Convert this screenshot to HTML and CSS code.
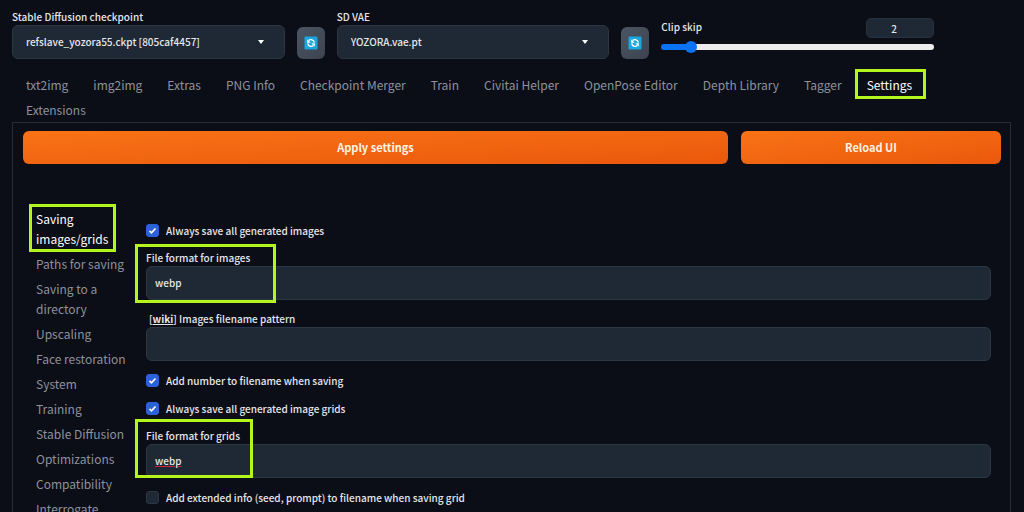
FILE: index.html
```html
<!DOCTYPE html>
<html lang="en">
<head>
<meta charset="utf-8">
<meta name="viewport" content="width=device-width, initial-scale=1">
<title>Stable Diffusion</title>
<link rel="stylesheet" href="styles.css">
</head>
<body>
<header class="quick">
  <div class="field">
    <label for="ckpt">Stable Diffusion checkpoint</label>
    <select id="ckpt" class="control select"><option>refslave_yozora55.ckpt [805caf4457]</option></select>
  </div>
  <button class="refresh" type="button" aria-label="Refresh checkpoints">
    <svg viewBox="0 0 14 14" width="14" height="14"><rect x="0.5" y="0.5" width="13" height="13" rx="1" fill="#1ba6dd"/><g fill="none" stroke="#fff" stroke-width="1.4"><path d="M4.6 4.6A3.4 3.4 0 0 1 10.3 6.6"/><path d="M9.4 9.4A3.4 3.4 0 0 1 3.7 7.4"/></g><path d="M3.2 3.2v3.5h3.5zM10.8 10.8V7.3H7.3z" fill="#fff"/></svg>
  </button>
  <div class="field">
    <label for="vae">SD VAE</label>
    <select id="vae" class="control select"><option>YOZORA.vae.pt</option></select>
  </div>
  <button class="refresh" type="button" aria-label="Refresh VAE list">
    <svg viewBox="0 0 14 14" width="14" height="14"><rect x="0.5" y="0.5" width="13" height="13" rx="1" fill="#1ba6dd"/><g fill="none" stroke="#fff" stroke-width="1.4"><path d="M4.6 4.6A3.4 3.4 0 0 1 10.3 6.6"/><path d="M9.4 9.4A3.4 3.4 0 0 1 3.7 7.4"/></g><path d="M3.2 3.2v3.5h3.5zM10.8 10.8V7.3H7.3z" fill="#fff"/></svg>
  </button>
  <div class="slider">
    <div class="slider-head">
      <label for="clip">Clip skip</label>
      <input class="number" type="number" value="2" min="1" max="12" aria-label="Clip skip value">
    </div>
    <input id="clip" class="range" type="range" min="1" max="12" value="2">
  </div>
</header>

<nav class="tabs">
  <button type="button">txt2img</button>
  <button type="button">img2img</button>
  <button type="button">Extras</button>
  <button type="button">PNG Info</button>
  <button type="button">Checkpoint Merger</button>
  <button type="button">Train</button>
  <button type="button">Civitai Helper</button>
  <button type="button">OpenPose Editor</button>
  <button type="button">Depth Library</button>
  <button type="button">Tagger</button>
  <button type="button" class="active">Settings<span class="mark mark-tab"></span></button>
  <button type="button">Extensions</button>
</nav>

<main class="panel">
  <div class="actions">
    <button class="primary wide" type="button">Apply settings</button>
    <button class="primary" type="button">Reload UI</button>
  </div>
  <div class="settings">
    <nav class="sections">
      <button type="button" class="active">Saving images/grids<span class="mark mark-section"></span></button>
      <button type="button">Paths for saving</button>
      <button type="button">Saving to a directory</button>
      <button type="button">Upscaling</button>
      <button type="button">Face restoration</button>
      <button type="button">System</button>
      <button type="button">Training</button>
      <button type="button">Stable Diffusion</button>
      <button type="button">Optimizations</button>
      <button type="button">Compatibility</button>
      <button type="button">Interrogate</button>
    </nav>
    <form class="options">
      <label class="check"><input type="checkbox" checked>Always save all generated images</label>
      <div class="field">
        <label for="fmt-images">File format for images</label>
        <input id="fmt-images" class="control" type="text" value="webp">
        <span class="mark mark-images"></span>
      </div>
      <div class="field">
        <label class="indented" for="pattern">[<a href="#wiki">wiki</a>] Images filename pattern</label>
        <input id="pattern" class="control" type="text">
      </div>
      <label class="check"><input type="checkbox" checked>Add number to filename when saving</label>
      <label class="check"><input type="checkbox" checked>Always save all generated image grids</label>
      <div class="field">
        <label for="fmt-grids">File format for grids</label>
        <input id="fmt-grids" class="control misspelt" type="text" value="webp">
        <span class="mark mark-grids"></span>
      </div>
      <label class="check"><input type="checkbox">Add extended info (seed, prompt) to filename when saving grid</label>
    </form>
  </div>
</main>
</body>
</html>
```
FILE: styles.css
```css
* { box-sizing: border-box; }

body {
  margin: 0;
  height: 100vh;
  padding: 8px 13px 0 12px;
  overflow: hidden;
  display: flex;
  flex-direction: column;
  background: #0b0d17;
  color: #e4e6ea;
  font-family: "Noto Sans CJK SC", "Noto Sans", sans-serif;
  font-size: 10px;
  font-weight: 500;
  line-height: 17px;
}

button, input, select {
  font: inherit;
  color: inherit;
  margin: 0;
}

button {
  border: 0;
  padding: 0;
  background: none;
  cursor: pointer;
}

.quick {
  display: grid;
  grid-template-columns: 1fr 28px 1fr 28px 1fr;
  column-gap: 12px;
  align-items: end;
  padding-right: 77px;
}

.field {
  position: relative;
  display: flex;
  flex-direction: column;
}

.control {
  width: 100%;
  height: 34px;
  padding: 0 8px 1px;
  border: 1px solid #2d3743;
  border-radius: 6px;
  background: #1e2935;
}

.select {
  appearance: none;
  padding: 0 13px 1px;
  background: #1e2935 url("data:image/svg+xml,%3Csvg xmlns='http://www.w3.org/2000/svg' viewBox='0 0 6 4'%3E%3Cpath d='M0 0h6L3 4z' fill='white'/%3E%3C/svg%3E") no-repeat right 20px center / 6px 4px;
}

.refresh {
  display: flex;
  align-items: center;
  justify-content: center;
  height: 32px;
  border-radius: 6px;
  background: linear-gradient(135deg, #4b5563, #3d4350);
}

.slider {
  align-self: start;
  padding-top: 10px;
}

.slider-head {
  display: flex;
  justify-content: space-between;
}

.number {
  width: 68px;
  height: 20px;
  padding: 0 12px 0 0;
  border: 1px solid #28323e;
  border-radius: 5px;
  background: #1e2935;
  text-align: center;
  appearance: textfield;
}

.number::-webkit-inner-spin-button { display: none; }

.range {
  appearance: none;
  display: block;
  width: 100%;
  height: 6px;
  margin-top: 6px;
  border-radius: 3px;
  background: linear-gradient(to right, #0b73f5 10%, #ececec 10%);
}

.range::-webkit-slider-thumb {
  appearance: none;
  width: 12px;
  height: 12px;
  border-radius: 50%;
  background: #0b73f5;
}

.tabs {
  display: flex;
  flex-wrap: wrap;
  padding: 13px 24px 0 1px;
  font-size: 12px;
  font-weight: 400;
  line-height: 25px;
  color: #8d929b;
}

.tabs button {
  position: relative;
  padding: 0 12px 0 13px;
}

.tabs .active, .sections .active { color: #fff; }

.panel {
  flex: 1 0 auto;
  padding: 8px 9px 8px 10px;
  border: 1px solid #272b35;
}

.actions {
  display: flex;
  gap: 13px;
}

.primary {
  flex: 260;
  height: 33px;
  border-radius: 6px;
  background: linear-gradient(to bottom right, #f97316, #ea580c);
  color: #fff3e4;
  font-size: 11px;
  font-weight: 700;
}

.wide { flex-grow: 705; }

.settings {
  display: grid;
  grid-template-columns: 113px 1fr;
  column-gap: 10px;
  padding: 43px 10px 0 0;
}

.sections {
  display: flex;
  flex-direction: column;
  color: #8d929b;
  font-size: 12px;
  font-weight: 400;
  line-height: 20px;
}

.sections button {
  position: relative;
  padding: 2px 7px 3px 13px;
  text-align: left;
}

.options {
  display: flex;
  flex-direction: column;
  gap: 10px;
  padding-top: 14px;
}

.indented { padding-left: 3px; }

.options a {
  color: inherit;
  font-weight: 700;
}

.check {
  display: flex;
  align-items: center;
  gap: 7px;
  height: 18px;
}

.check input {
  appearance: none;
  width: 13px;
  height: 13px;
  border: 1px solid #2d3743;
  border-radius: 3px;
  background: #1e2935;
}

.check input:checked {
  border-color: #2b62dc;
  background: #2b62dc url("data:image/svg+xml,%3Csvg xmlns='http://www.w3.org/2000/svg' viewBox='0 0 11 11'%3E%3Cpath d='M2.5 5.8l2 2 4-4.3' fill='none' stroke='white' stroke-width='1.7'/%3E%3C/svg%3E") center / 11px 11px;
}

.misspelt { text-decoration: underline 1px #c8283a; }

/* Highlight frames drawn over the page */
.mark {
  position: absolute;
  border: 3px solid #b4f51e;
  pointer-events: none;
}

.mark-tab { inset: -3px -2px -2px 1px; }
.mark-section { inset: -3px 20px 0 6px; }
.mark-images { top: -5px; left: -11px; width: 141px; height: 59px; }
.mark-grids { top: -8px; left: -11px; width: 118px; height: 59px; }
```
